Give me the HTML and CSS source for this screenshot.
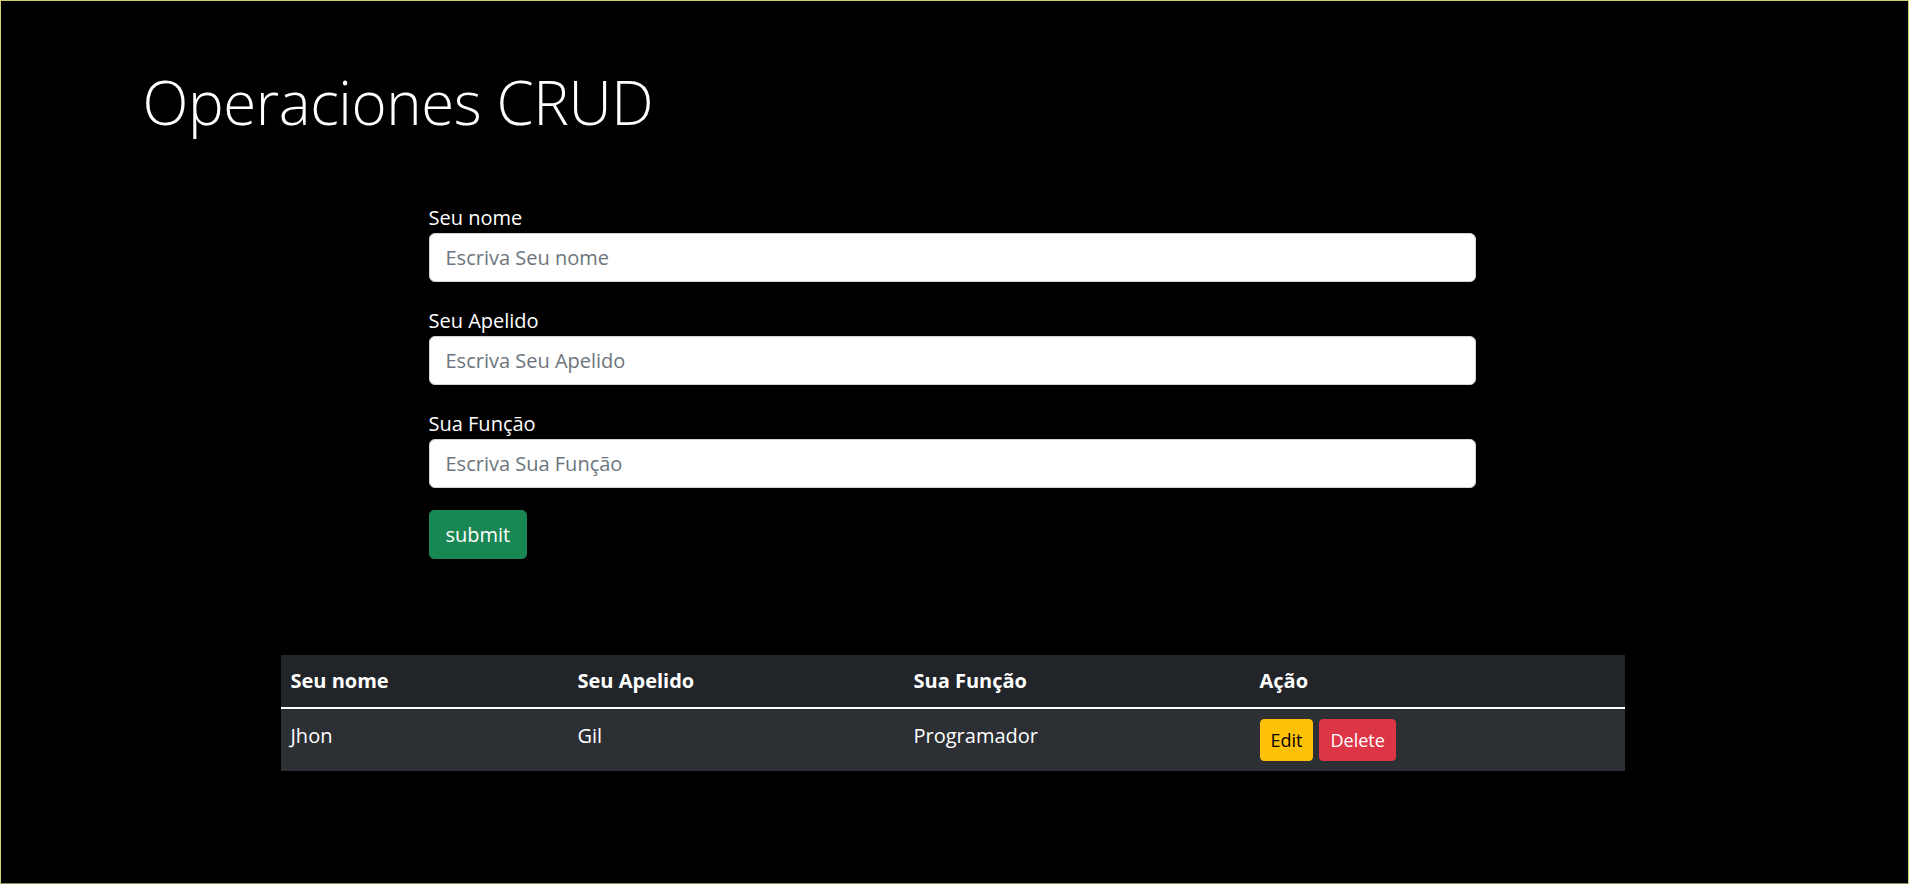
FILE: index.html
```html
<!DOCTYPE html>
<html lang="pt">
<head>
<meta charset="utf-8">
<title>Operaciones CRUD</title>
<link rel="stylesheet" href="styles.css">
</head>
<body>
<div class="frame">
  <div class="container">
    <h1 class="title">Operaciones CRUD</h1>
    <form class="crud-form">
      <div class="group">
        <label class="label" for="nome">Seu nome</label>
        <input class="input" id="nome" type="text" placeholder="Escriva Seu nome">
      </div>
      <div class="group">
        <label class="label" for="apelido">Seu Apelido</label>
        <input class="input" id="apelido" type="text" placeholder="Escriva Seu Apelido">
      </div>
      <div class="group">
        <label class="label" for="funcao">Sua Função</label>
        <input class="input" id="funcao" type="text" placeholder="Escriva Sua Função">
      </div>
      <button class="btn-submit" type="button">submit</button>
    </form>
    <table class="table">
      <thead>
        <tr>
          <th class="c1">Seu nome</th>
          <th class="c2">Seu Apelido</th>
          <th class="c3">Sua Função</th>
          <th class="c4">Ação</th>
        </tr>
      </thead>
      <tbody>
        <tr>
          <td>Jhon</td>
          <td>Gil</td>
          <td>Programador</td>
          <td class="action-cell"><div class="actions"><button class="btn-sm btn-edit" type="button">Edit</button><button class="btn-sm btn-delete" type="button">Delete</button></div></td>
        </tr>
      </tbody>
    </table>
  </div>
</div>
</body>
</html>
```

FILE: styles.css
```css
* { box-sizing: border-box; }
html, body { margin: 0; padding: 0; background: #000; }
body {
  font-family: "Open Sans", "Noto Sans", sans-serif;
  color: #fff;
  font-size: 20px;
  line-height: 30px;
}
.frame {
  height: 884px;
  border: 1px solid #cfcf6c;
  border-bottom-color: #8f8f55;
  overflow: hidden;
}
.container {
  width: 1620px;
  margin: 0 auto;
  padding-top: 65px;
}
.title {
  margin: 0 0 0 -2px;
  font-size: 60px;
  line-height: 72px;
  font-weight: 300;
  letter-spacing: -0.4px;
}
.crud-form {
  width: 1047px;
  margin: 63px 0 0 284px;
}
.group { margin-bottom: 22px; }
.label {
  display: block;
  line-height: 30px;
  padding-top: 2px;
  margin-bottom: 0;
}
.input {
  display: block;
  width: 100%;
  height: 49px;
  padding: 0 16px;
  font-family: inherit;
  font-size: 20px;
  color: #495057;
  background: #fff;
  border: 1px solid #ced4da;
  border-radius: 6px;
  outline: none;
}
.input::placeholder { color: #6c757d; }
.btn-submit {
  display: block;
  height: 49px;
  padding: 0 16px;
  font-family: inherit;
  font-size: 20px;
  color: #fff;
  background: #198754;
  border: 1px solid #198754;
  border-radius: 5px;
}
.table {
  width: 1344px;
  margin: 96px 0 0 136px;
  border-collapse: collapse;
  table-layout: fixed;
}
.table th, .table td {
  text-align: left;
  vertical-align: top;
  line-height: 30px;
}
.table th {
  padding: 11px 10px;
  font-weight: 700;
  background: #212529;
  border-bottom: 2px solid #fff;
}
.table td {
  padding: 12px 10px 10px;
  background: #2c3034;
}
.table td.action-cell { padding: 10px 10px 10px; }
.c1 { width: 287px; }
.c2 { width: 336px; }
.c3 { width: 346px; }
.c4 { width: 375px; }
.actions { display: flex; gap: 6px; }
.btn-sm {
  height: 42px;
  padding: 0 10px;
  font-family: "Open Sans", sans-serif;
  font-size: 18px;
  border-radius: 4px;
  border: 1px solid transparent;
}
.btn-edit { background: #ffc107; border-color: #ffc107; color: #000; }
.btn-delete { background: #dc3545; border-color: #dc3545; color: #fff; }
```
